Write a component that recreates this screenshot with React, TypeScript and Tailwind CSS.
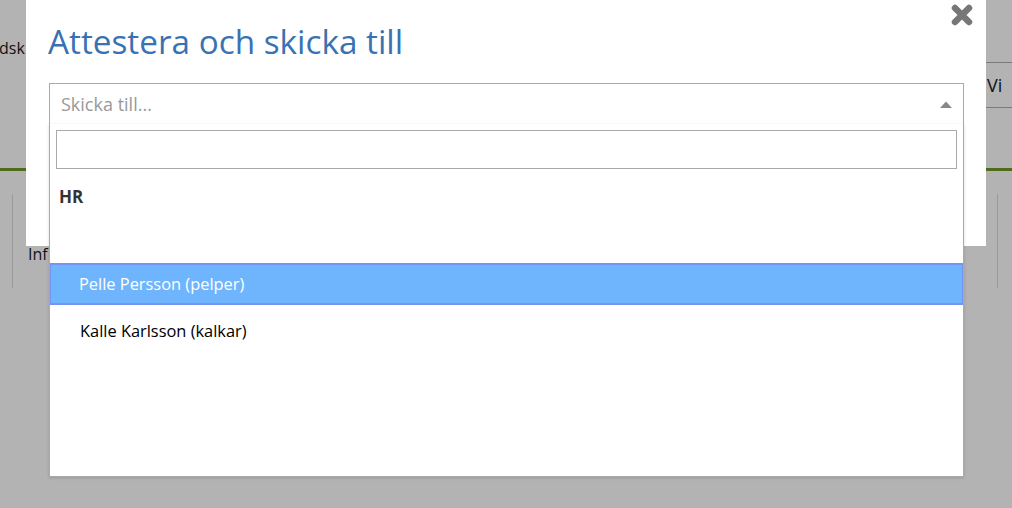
import React from "react";

export default function App() {
  return (
    <div className="relative w-[1012px] h-[508px] overflow-hidden bg-[#b3b3b3] font-['Open_Sans',sans-serif] text-black">
      {/* underlying page (dimmed) */}
      <div className="flex flex-col">
        <div className="flex justify-between items-start pt-[36px]">
          <div className="text-[16px] leading-[24px] text-[#111] ml-[-1px]">dsk</div>
        </div>
        <div className="flex justify-end mt-[2px]">
          <div className="w-[26px] h-[46px] border-y border-[#7a7a7a] flex items-center pl-[1px] text-[18px] text-[#111] whitespace-nowrap">
            Vi
          </div>
        </div>
        <div className="h-[3px] bg-[#4f6b1c] mt-[60px]" />
        <div className="flex justify-between mt-[23px]">
          <div className="flex">
            <div className="w-px h-[94px] bg-[#999] ml-[12px]" />
            <div className="text-[16px] leading-[24px] text-[#111] ml-[15px] mt-[48px]">Inf</div>
          </div>
          <div className="w-px h-[94px] bg-[#999] mr-[14px]" />
        </div>
      </div>

      {/* modal */}
      <div className="absolute left-[26px] top-0 w-[960px] h-[246px] bg-white">
        <div className="flex justify-between">
          <h1 className="pl-[22px] pt-[25px] text-[33.3px] leading-[33px] text-[#3872b4] font-normal">
            Attestera och skicka till
          </h1>
          <svg width="22" height="22" viewBox="0 0 22 22" className="mt-[4px] mr-[13px]">
            <path d="M4 4 L18 18 M18 4 L4 18" stroke="#777" strokeWidth="6.5" strokeLinecap="round" />
          </svg>
        </div>

        <div className="relative ml-[23px] mt-[25px] w-[915px]">
          <div className="h-[42px] border border-[#aaa] flex items-center justify-between pl-[11px] pr-[11px]">
            <span className="text-[18px] text-[#999]">Skicka till...</span>
            <svg width="12" height="7" viewBox="0 0 12 7">
              <path d="M0 7 L6 0.5 L12 7 Z" fill="#888" />
            </svg>
          </div>
          <div className="absolute left-0 top-[41px] w-[915px] h-[353px] bg-white border border-t-0 border-[#aaa] shadow-[0_1px_3px_rgba(0,0,0,0.15)] flex flex-col">
            <div className="px-[6px] pt-[6px]">
              <div className="h-[39px] border border-[#aaa]" />
            </div>
            <div className="pl-[9px] pt-[15px] text-[17px] leading-[26px] font-bold text-[#333]">HR</div>
            <div className="mt-[53px] h-[42px] bg-[#6fb5fd] border-y-2 border-x border-[#7394f5] flex items-center pl-[28px] text-[16.4px] text-white">
              Pelle Persson (pelper)
            </div>
            <div className="pl-[30px] pt-[13px] text-[16.4px] leading-[26px] text-black">
              Kalle Karlsson (kalkar)
            </div>
          </div>
        </div>
      </div>
    </div>
  );
}
